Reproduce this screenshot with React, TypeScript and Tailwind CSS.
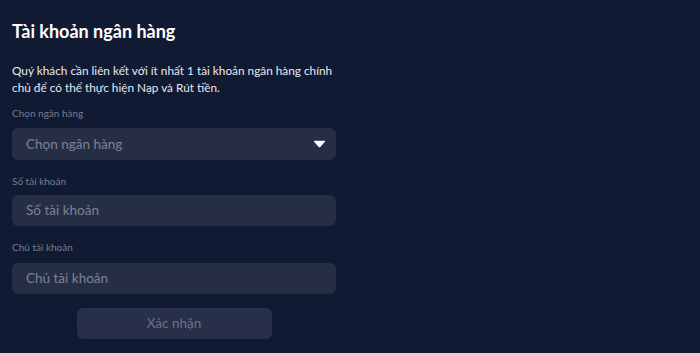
import React from "react";

export default function App() {
  return (
    <div
      className="w-[700px] h-[353px] bg-[#111a33] overflow-hidden"
      style={{ fontFamily: "Lato, 'Noto Sans', sans-serif" }}
    >
      <div className="w-[324px] ml-[12px] pt-[19px] flex flex-col">
        <h1 className="text-[18px] leading-[24px] font-bold text-white">Tài khoản ngân hàng</h1>
        <p className="mt-[19px] w-[330px] text-[11.8px] leading-[17px] text-[#e6e9f0]">
          Quý khách cần liên kết với ít nhất 1 tài khoản ngân hàng chính chủ để có thể thực hiện Nạp và Rút tiền.
        </p>
        <label className="mt-[10px] text-[10px] leading-[14px] text-[#747c91]">Chọn ngân hàng</label>
        <div className="mt-[8px] h-[32px] rounded-[6px] bg-[#262e45] flex items-center justify-between pl-[14px] pr-[10px]">
          <span className="text-[13.5px] text-[#7a8296]">Chọn ngân hàng</span>
          <svg width="13" height="8" viewBox="0 0 13 8">
            <path d="M1.5 0.8 H11.5 Q12.6 0.8 11.9 1.8 L7.3 6.9 Q6.5 7.7 5.7 6.9 L1.1 1.8 Q0.4 0.8 1.5 0.8 Z" fill="#ffffff" />
          </svg>
        </div>
        <label className="mt-[14px] text-[10px] leading-[14px] text-[#747c91]">Số tài khoản</label>
        <div className="mt-[7px] h-[31px] rounded-[6px] bg-[#262e45] flex items-center pl-[14px]">
          <span className="text-[13.5px] text-[#7a8296]">Số tài khoản</span>
        </div>
        <label className="mt-[14px] text-[10px] leading-[14px] text-[#747c91]">Chủ tài khoản</label>
        <div className="mt-[9px] h-[31px] rounded-[6px] bg-[#262e45] flex items-center pl-[14px]">
          <span className="text-[13.5px] text-[#7a8296]">Chủ tài khoản</span>
        </div>
        <div className="mt-[14px] flex justify-center">
          <button className="w-[195px] h-[31px] rounded-[6px] bg-[#283049] text-[13.5px] text-[#687086]">
            Xác nhận
          </button>
        </div>
      </div>
    </div>
  );
}
